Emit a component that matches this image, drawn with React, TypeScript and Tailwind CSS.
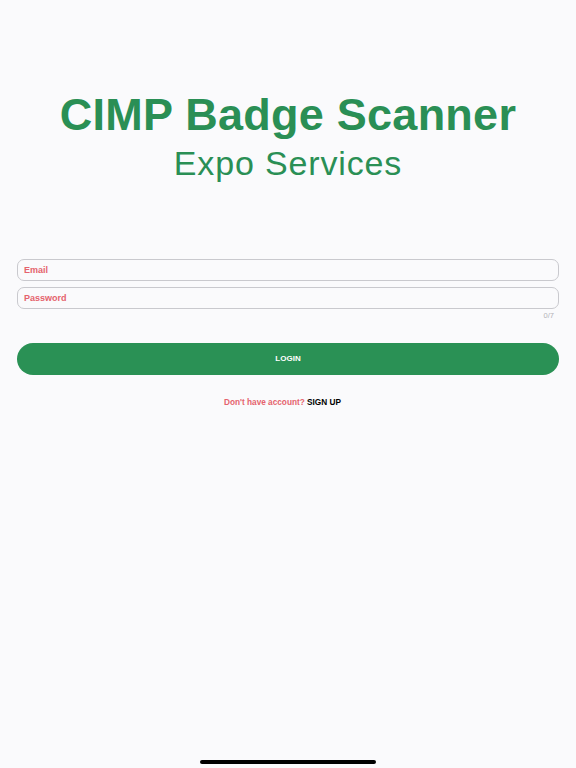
import React from "react";

export default function App() {
  return (
    <div
      className="relative h-[768px] w-full bg-[#fafafc] flex flex-col"
      style={{ fontFamily: '"Liberation Sans", Arial, sans-serif' }}
    >
      <div className="pt-[92px] flex flex-col items-center text-[#2a8f55]">
        <h1 className="text-[45px] font-bold leading-none tracking-[0.25px]">CIMP Badge Scanner</h1>
        <h2 className="mt-[8.5px] text-[34px] leading-none tracking-[0.85px]">Expo Services</h2>
      </div>

      <div className="mt-[79px] px-[17px] flex flex-col">
        <input
          type="email"
          placeholder="Email"
          className="h-[22px] w-full rounded-[7px] border border-[#c9c9ce] bg-[#fafafc] px-[6px] text-[9px] font-bold outline-none placeholder:text-[#e5636d]"
        />
        <input
          type="password"
          placeholder="Password"
          className="mt-[6px] h-[22px] w-full rounded-[7px] border border-[#c9c9ce] bg-[#fafafc] px-[6px] text-[9px] font-bold outline-none placeholder:text-[#e5636d]"
        />
        <div className="mt-[3px] pr-[5px] text-right text-[7.5px] leading-none text-[#b3b3b8]">0/7</div>

        <button className="mt-[24px] h-[32px] w-full rounded-full bg-[#2a9155] text-[8px] font-bold text-white">
          LOGIN
        </button>

        <div className="mt-[24px] pr-[11px] text-center text-[8.25px] font-bold leading-none">
          <span className="text-[#e5636d]">Don't have account? </span>
          <span className="text-black">SIGN UP</span>
        </div>
      </div>

      <div className="absolute bottom-[4px] left-[200px] h-[4px] w-[176px] rounded-full bg-black" />
    </div>
  );
}
